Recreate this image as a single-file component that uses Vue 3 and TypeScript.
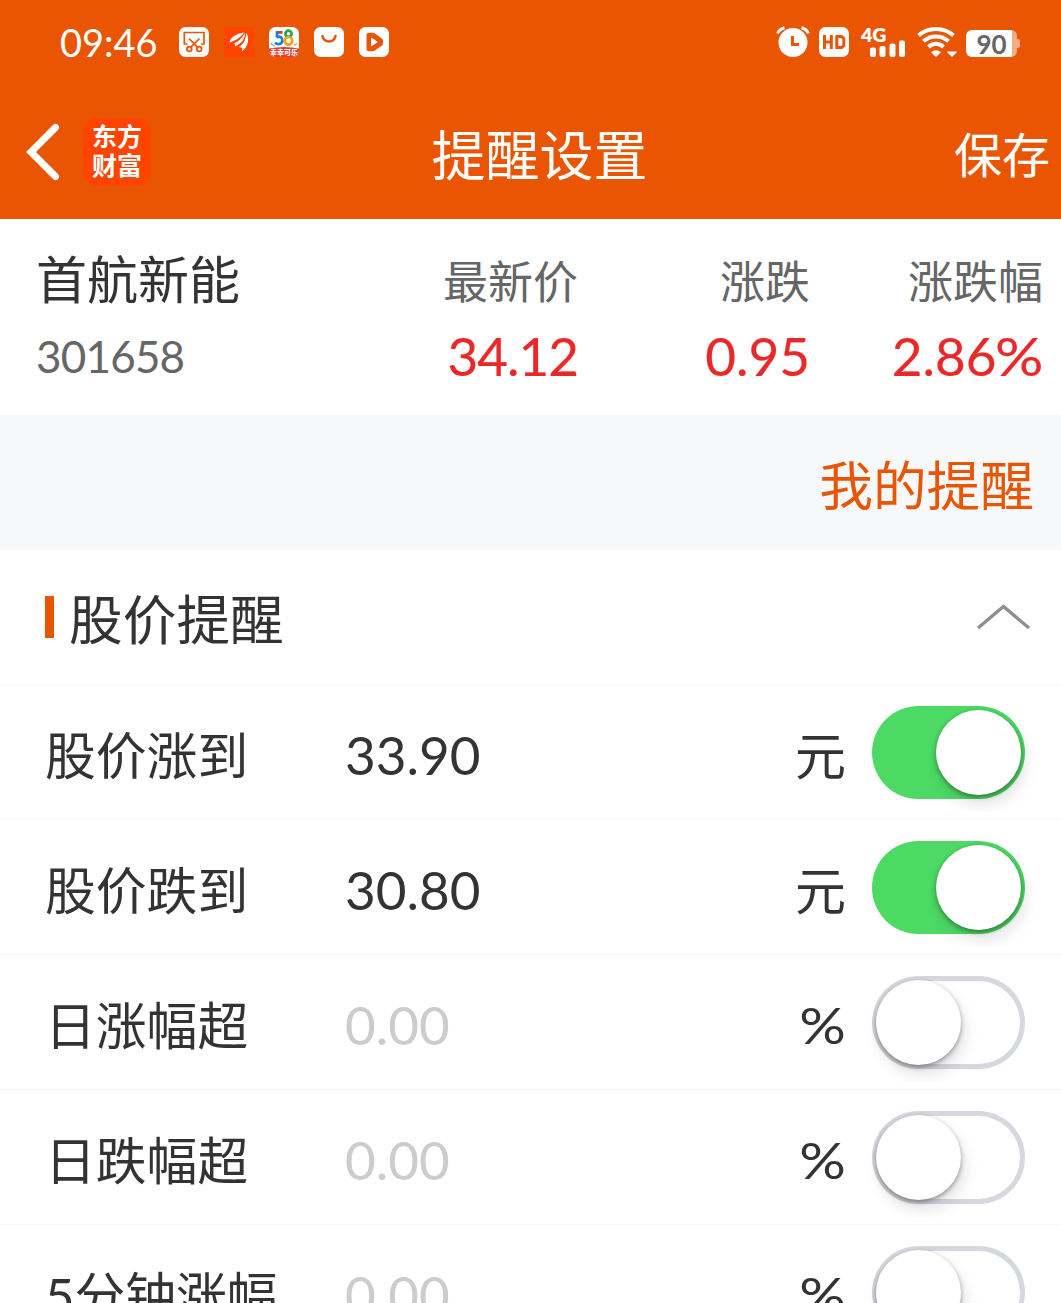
<script setup lang="ts">
import { reactive } from 'vue'

interface Rule {
  label: string
  value: string
  unit: string
  on: boolean
}

interface Quote {
  title: string
  value: string
  percent?: boolean
  tight?: boolean
}

const quotes: Quote[] = [
  { title: '最新价', value: '34.12', tight: true },
  { title: '涨跌', value: '0.95' },
  { title: '涨跌幅', value: '2.86', percent: true },
]

const rules = reactive<Rule[]>([
  { label: '股价涨到', value: '33.90', unit: '元', on: true },
  { label: '股价跌到', value: '30.80', unit: '元', on: true },
  { label: '日涨幅超', value: '0.00', unit: '%', on: false },
  { label: '日跌幅超', value: '0.00', unit: '%', on: false },
  { label: '5分钟涨幅', value: '0.00', unit: '%', on: false },
])
</script>

<template>
  <div class="screen">
    <header class="top">
      <div class="status">
        <div class="status-left">
          <span class="clock">09:46</span>
          <svg width="30" height="30" viewBox="0 0 30 30">
            <rect width="30" height="30" rx="6.5" fill="#fff" />
            <g fill="none" stroke="#ea5504" stroke-width="1.7">
              <path d="M8.500 17H5.300V5.500H25V17H22" />
              <path d="M10 11.500L18.500 20.200M20.500 11.500L12 20.200" />
              <circle cx="10.300" cy="22" r="2.400" />
              <circle cx="20.200" cy="22" r="2.400" />
            </g>
          </svg>
          <svg width="30" height="30" viewBox="0 0 30 30">
            <rect width="30" height="30" rx="2.5" fill="#ff4400" />
            <path d="M5.500 15.500C6 11 11.500 6.500 20.500 5.500C17.500 8 15.500 12.500 5.500 15.500Z" fill="#fff" />
            <path d="M10.500 19.500C11.500 18 11 17 10 16.200C15.500 14.500 18.500 10 21 6C21.300 11.500 17.500 17 10.500 19.500Z" fill="#fff" />
            <path d="M17.500 24.800C19 22 18.500 20.500 15 20C20.500 16.500 22 11.500 22 5.800C26 11 24.500 20 17.500 24.800Z" fill="#fff" />
          </svg>
          <svg width="30" height="30" viewBox="0 0 30 30">
            <clipPath id="festival"><rect width="30" height="30" rx="6.500" /></clipPath>
            <g clip-path="url(#festival)">
              <rect width="30" height="30" fill="#fff" />
              <g fill="none" stroke-width="2.700">
                <path d="M13.500 5.300H8.200" stroke="#e63232" />
                <path d="M8 4V10.500" stroke="#1782d2" />
                <path d="M7.500 10.300C11.500 8.500 13.800 11 13.300 14C12.800 17.500 8.500 18 6 15.800" stroke="#1782d2" />
                <circle cx="19.500" cy="6.800" r="3.100" stroke="#27a844" />
                <circle cx="19.500" cy="13.800" r="3.800" stroke="#f5a01e" />
              </g>
              <path d="M0 21.500Q15 18.500 30 21.500V30H0Z" fill="#e8382a" />
              <path d="M2 16l2 2.500M4.500 18l1 1.500" stroke="#36a9e1" stroke-width="1.200" />
              <path d="M28 16l-2 2.500M25 17l1 1.500" stroke="#f5a01e" stroke-width="1.200" />
              <text x="15" y="27.600" text-anchor="middle" class="tiny">幸幸可乐</text>
            </g>
          </svg>
          <svg width="30" height="30" viewBox="0 0 30 30">
            <rect width="30" height="30" rx="6.500" fill="#fff" />
            <path d="M8.500 9C10 16.300 20 16.300 21.500 9" fill="none" stroke="#ea5504" stroke-width="2.500" stroke-linecap="round" />
          </svg>
          <svg width="30" height="30" viewBox="0 0 30 30">
            <rect width="30" height="30" rx="6.500" fill="#fff" />
            <path d="M10 8.300H14L21.500 13.500V16.500L14 21.700H10Z" fill="#ea5504" stroke="#ea5504" stroke-width="5" stroke-linejoin="round" />
            <path d="M12.500 11.200V18.800L18.300 15Z" fill="#fff" stroke="#fff" stroke-width="1" stroke-linejoin="round" />
          </svg>
        </div>
        <div class="status-right">
          <svg width="34" height="32" viewBox="0 0 34 32">
            <circle cx="17" cy="16.500" r="14.500" fill="#fff" />
            <path d="M1.500 7.500Q3.500 3 8.500 1.800M32.500 7.500Q30.500 3 25.500 1.800" fill="none" stroke="#fff" stroke-width="3" />
            <path d="M16.500 10V18.500H23" fill="none" stroke="#ea5504" stroke-width="3" />
          </svg>
          <svg class="hd" width="30" height="30" viewBox="0 0 30 30">
            <rect width="30" height="30" rx="6.500" fill="#fff" />
            <path d="M5.500 8V22M12.300 8V22M5.500 15H12.300M17.800 9.400H22.500L24.800 11.500V18.500L22.500 20.600H17.800Z" fill="none" stroke="#ea5504" stroke-width="3" />
          </svg>
          <svg class="signal" width="45" height="32" viewBox="0 0 45 32">
            <text x="0" y="15.500" class="net">4G</text>
            <g fill="#fff">
              <rect x="9" y="21.500" width="6" height="9.500" rx="2" />
              <rect x="18.500" y="20" width="6" height="11" rx="2" />
              <rect x="28.500" y="17.500" width="6" height="13.500" rx="2" />
              <rect x="38" y="14.500" width="6" height="16.500" rx="2" />
            </g>
          </svg>
          <svg class="wifi" width="40" height="32" viewBox="0 0 40 32">
            <g fill="none" stroke="#fff" stroke-width="4">
              <path d="M1.500 9.500C11 0.700 27 0.700 36.500 9.500" />
              <path d="M6.500 15.300C13.500 8.800 24.500 8.800 31.500 15.300" />
              <path d="M11.500 21C16 16.800 22 16.800 26.500 21" />
            </g>
            <path d="M14 26.200Q19 22.500 24 26.200L19 31Z" fill="#fff" />
            <path d="M30.500 26H39.500L35 30.500Z" fill="#fff" stroke="#fff" stroke-width="1" stroke-linejoin="round" />
          </svg>
          <div class="battery"><span>90</span></div>
        </div>
      </div>
      <nav class="nav">
        <div class="nav-left">
          <svg width="34" height="56" viewBox="0 0 34 56">
            <path d="M29.500 3.500L5 28L29.500 52.500" fill="none" stroke="#fff" stroke-width="7" stroke-linecap="round" stroke-linejoin="miter" />
          </svg>
          <div class="brand"><span>东方</span><span>财富</span></div>
        </div>
        <h1>提醒设置</h1>
        <button class="save">保存</button>
      </nav>
    </header>

    <section class="summary">
      <div class="stock">
        <span class="name">首航新能</span>
        <span class="code">301658</span>
      </div>
      <div v-for="q in quotes" :key="q.title" class="quote">
        <span class="quote-title">{{ q.title }}</span>
        <span class="quote-value" :class="{ tight: q.tight }">{{ q.value }}<span v-if="q.percent" class="percent">%</span></span>
      </div>
    </section>

    <div class="mine">我的提醒</div>

    <section class="list">
      <div class="group">
        <i class="bar"></i>
        <h2>股价提醒</h2>
        <svg width="54" height="28" viewBox="0 0 54 28">
          <path d="M2 25L27.500 3.500L53 25" fill="none" stroke="#8e8e93" stroke-width="3.300" />
        </svg>
      </div>
      <div v-for="r in rules" :key="r.label" class="row">
        <span class="label">{{ r.label }}</span>
        <span class="value" :class="{ empty: !r.on }">{{ r.value }}</span>
        <span class="unit"><span :class="{ percent: r.unit === '%' }">{{ r.unit }}</span></span>
        <div class="switch-area" @click="r.on = !r.on">
          <div class="switch" :class="{ on: r.on }"><i></i></div>
        </div>
      </div>
    </section>
  </div>
</template>

<style>
body {
  margin: 0;
  overflow: hidden;
}
</style>

<style scoped>
.screen {
  width: 1061px;
  height: 1303px;
  overflow: hidden;
  background: #fff;
  color: #333;
  font-family: Lato, "Noto Sans CJK SC", sans-serif;
}
svg {
  display: block;
  flex: none;
  overflow: visible;
}
.top {
  height: 219px;
  background: #ea5504;
  color: #fff;
}
.status {
  display: flex;
  justify-content: space-between;
  height: 84px;
  box-sizing: border-box;
  padding: 0 41px 0 60px;
}
.status-left {
  display: flex;
  align-items: center;
  gap: 15px;
}
.clock {
  width: 104px;
  font-size: 38px;
  line-height: 40px;
  white-space: nowrap;
  padding-bottom: 1px;
}
.tiny {
  font-size: 7px;
  font-weight: 900;
  fill: #fff;
}
.status-right {
  display: flex;
  align-items: center;
}
.hd {
  margin-left: 9px;
}
.signal {
  margin-left: 12px;
}
.wifi {
  margin-left: 11px;
}
.net {
  font-size: 19.5px;
  font-weight: 800;
  fill: #fff;
}
.battery {
  position: relative;
  width: 51px;
  height: 27px;
  margin: 2px 3px 0 9px;
  border-radius: 6px;
  background: linear-gradient(90deg, #fff 46px, #f5ab84 46px);
  color: #666;
  font-size: 26px;
  font-weight: 700;
  line-height: 29px;
  text-align: center;
}
.battery::after {
  content: "";
  position: absolute;
  right: -3px;
  top: 9px;
  width: 3px;
  height: 9px;
  border-radius: 0 2px 2px 0;
  background: #f5ab84;
}
.nav {
  display: grid;
  grid-template-columns: 1fr auto 1fr;
  align-items: center;
  height: 135px;
}
.nav-left {
  display: flex;
  align-items: center;
  gap: 23px;
  padding-left: 26px;
}
.brand {
  display: flex;
  flex-direction: column;
  align-items: center;
  justify-content: center;
  box-sizing: border-box;
  width: 68px;
  height: 68px;
  padding-bottom: 4px;
  border-radius: 14px;
  background: #ff4400;
  font-family: "Noto Sans CJK SC", sans-serif;
  font-size: 25px;
  font-weight: 700;
  line-height: 29px;
}
h1,
h2 {
  margin: 0;
  font-size: 54px;
  font-weight: 400;
  line-height: 60px;
}
h1 {
  padding: 8px 0 0 18px;
}
.save {
  justify-self: end;
  border: 0;
  padding: 6px 11px 0 0;
  background: none;
  color: #fff;
  font: inherit;
  font-size: 48px;
  line-height: 60px;
}
.summary {
  display: grid;
  grid-template-columns: 342px 236px 232px 233px;
  height: 196px;
}
.stock,
.quote {
  display: flex;
  flex-direction: column;
  padding-top: 31px;
}
.stock {
  padding-left: 36px;
}
.quote {
  align-items: flex-end;
}
.name {
  font-size: 51px;
  line-height: 60px;
}
.code {
  margin-top: 16px;
  color: #666;
  font-size: 44px;
  letter-spacing: -0.8px;
  line-height: 60px;
}
.quote-title {
  padding-top: 2px;
  color: #666;
  font-size: 45px;
  line-height: 60px;
}
.quote-value {
  margin-top: 14px;
  color: #eb2828;
  font-size: 53px;
  line-height: 60px;
  -webkit-text-stroke: 0.2px currentColor;
}
.tight {
  letter-spacing: -1px;
}
.percent {
  display: inline-block;
  margin-left: 4px;
  transform: scaleX(1.14);
  transform-origin: right center;
}
.mine {
  box-sizing: border-box;
  height: 135px;
  padding: 6px 27px 0 0;
  background: #f7f8fa;
  color: #ea5504;
  font-size: 53.7px;
  line-height: 128px;
  text-align: right;
}
.group,
.row {
  display: flex;
  align-items: center;
  box-sizing: border-box;
  height: 135px;
  border-bottom: 1px solid #f5f5f5;
}
.group {
  padding: 0 31px 0 45px;
}
.bar {
  width: 9px;
  height: 42px;
  background: #ea5504;
}
h2 {
  flex: 1;
  padding: 3px 0 0 15px;
  font-size: 53.7px;
}
.row {
  padding-left: 45px;
}
.label {
  width: 300px;
  padding-top: 8px;
  font-size: 50.8px;
  line-height: 60px;
}
.value {
  flex: 1;
  padding-top: 5px;
  font-size: 53px;
  line-height: 60px;
}
.empty {
  color: #ccc;
}
.unit {
  padding: 8px 23px 0 0;
  font-size: 51px;
  line-height: 60px;
}
.unit .percent {
  position: relative;
  top: -1px;
}
.switch-area {
  display: flex;
  align-items: center;
  width: 166px;
  height: 119px;
  overflow: hidden;
  margin-right: 26px;
  padding-left: 3px;
  box-sizing: border-box;
}
.switch {
  display: flex;
  box-sizing: border-box;
  width: 153px;
  height: 93px;
  padding: 4px;
  border-radius: 47px;
  box-shadow: inset 0 0 0 5px #d5d8de;
}
.switch i {
  width: 85px;
  height: 85px;
  border-radius: 50%;
  background: #fff;
  box-shadow: 0 2px 5px rgba(0, 0, 0, 0.38), 4px 10px 16px rgba(0, 0, 0, 0.11);
}
.switch.on {
  justify-content: flex-end;
  background: #4cd964;
  box-shadow: none;
}
</style>
